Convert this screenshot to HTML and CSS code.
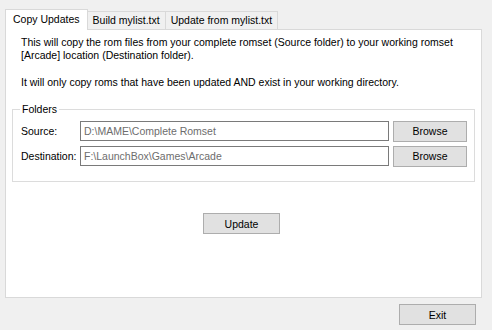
FILE: index.html
```html
<!DOCTYPE html>
<html lang="en">
<head>
  <meta charset="UTF-8" />
  <title>Copy Updates</title>
  <link rel="stylesheet" href="styles.css">
</head>
<body>

<div class="window">
  <div class="tabs">
    <div class="tab active">Copy Updates</div>
    <div class="tab">Build mylist.txt</div>
    <div class="tab">Update from mylist.txt</div>
  </div>

  <div class="panel">
    <p class="intro">This will copy the rom files from your complete romset (Source folder) to your working romset<br>[Arcade] location (Destination folder).</p>
    <p class="intro second">It will only copy roms that have been updated AND exist in your working directory.</p>

    <fieldset class="group">
      <legend>Folders</legend>
      <div class="row">
        <label>Source:</label>
        <input type="text" value="D:\MAME\Complete Romset" readonly />
        <button>Browse</button>
      </div>
      <div class="row">
        <label>Destination:</label>
        <input type="text" value="F:\LaunchBox\Games\Arcade" readonly />
        <button>Browse</button>
      </div>
    </fieldset>

    <div class="action">
      <button class="wide">Update</button>
    </div>
  </div>

  <div class="footer">
    <button class="wide">Exit</button>
  </div>
</div>

</body>
</html>
```

FILE: styles.css
```css
* {
  box-sizing: border-box;
}

body {
  margin: 0;
  font-family: 'Liberation Sans', Arial, sans-serif;
  font-size: 10.5px;
  color: #000;
  background: #f0f0f0;
  width: 492px;
  height: 330px;
  overflow: hidden;
}

.window {
  padding: 9px 0 0 5px;
}

.tabs {
  display: flex;
  align-items: flex-end;
  height: 20px;
}

.tab {
  height: 18px;
  padding: 0 5px;
  line-height: 17px;
  border: 1px solid #d9d9d9;
  border-bottom: none;
  background: #f0f0f0;
  margin-left: -1px;
}

.tab.active {
  height: 21px;
  margin-left: 0;
  margin-bottom: -1px;
  padding: 0 7px;
  line-height: 19px;
  background: #fff;
  position: relative;
  z-index: 1;
}

.panel {
  width: 477px;
  height: 269px;
  background: #fff;
  border: 1px solid #d9d9d9;
  padding: 6px 6px 0 6px;
}

.intro {
  margin: 0 0 0 9px;
  line-height: 13px;
}

.intro.second {
  margin-top: 14px;
}

.group {
  margin: 14px 0 0 0;
  width: 463px;
  height: 79px;
  border: 1px solid #dcdcdc;
  padding: 6px 6px 0 8px;
}

.group legend {
  padding: 0 2px;
  margin-left: -1px;
}

.row {
  display: flex;
  align-items: center;
  height: 20px;
  margin-bottom: 5px;
}

.row label {
  width: 59px;
}

.row input {
  width: 309px;
  height: 20px;
  border: 1px solid #7a7a7a;
  font-family: inherit;
  font-size: 10.5px;
  color: #6d6d6d;
  padding: 0 3px;
  outline: none;
}

button {
  font-family: inherit;
  font-size: 10.5px;
  color: #000;
  background: #e1e1e1;
  border: 1px solid #adadad;
  height: 21px;
  padding: 0;
}

.row button {
  width: 74px;
  margin-left: 4px;
}

.action {
  display: flex;
  justify-content: center;
  margin-top: 31px;
  padding-right: 4px;
}

.wide {
  width: 77px;
}

.footer {
  display: flex;
  justify-content: flex-end;
  padding: 6px 16px 0 0;
}
```
